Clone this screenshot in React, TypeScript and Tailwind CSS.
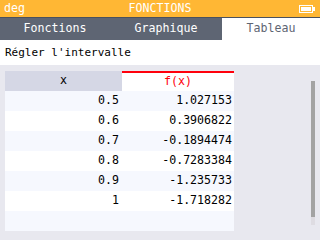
import React from "react";

const rows: [string, string][] = [
  ["0.5", "1.027153"],
  ["0.6", "0.3906822"],
  ["0.7", "-0.1894474"],
  ["0.8", "-0.7283384"],
  ["0.9", "-1.235733"],
  ["1", "-1.718282"],
  ["", ""],
];

export default function App() {
  return (
    <div className="w-[320px] h-[240px] bg-[#E8E8EF] flex flex-col font-['DejaVu_Sans_Mono',monospace] text-[11.6px] leading-none overflow-hidden">
      <div className="h-[17px] bg-[#FFB734] grid grid-cols-[1fr_auto_1fr] items-center text-white px-[4px]">
        <span>deg</span>
        <span>FONCTIONS</span>
        <div className="flex justify-end pr-[1px]">
          <svg width="16" height="8" viewBox="0 0 16 8">
            <rect x="0.5" y="0.5" width="13" height="7" fill="none" stroke="white" />
            <rect x="2" y="2" width="10" height="4" fill="white" />
            <rect x="14" y="2" width="2" height="4" fill="white" />
          </svg>
        </div>
      </div>
      <div className="h-px bg-[#4B515D]" />
      <div className="flex h-[22px]">
        <div className="w-[110px] bg-[#5E6573] text-white flex items-center justify-center">Fonctions</div>
        <div className="w-[112px] bg-[#5E6573] text-white flex items-center justify-center">Graphique</div>
        <div className="w-[98px] bg-white text-[#5E6573] flex items-center justify-center">Tableau</div>
      </div>
      <div className="h-[25px] bg-white flex items-center px-[5px] text-black text-[11px]">R&eacute;gler l'intervalle</div>
      <div className="flex pt-[6px] pl-[5px]">
        <div className="flex flex-col w-[229px]">
          <div className="flex h-[20px]">
            <div className="w-[117px] bg-[#D5D7E5] flex items-center justify-center text-black">x</div>
            <div className="w-[112px] bg-white border-t-2 border-[#FF000C] flex items-center justify-center text-[#FF000C]">f(x)</div>
          </div>
          {rows.map((r, i) => (
            <div key={i} className={`flex h-[20px] text-black ${i % 2 === 0 ? "bg-[#F6F8FE]" : "bg-white"}`}>
              <div className="w-[117px] flex items-center justify-end pr-[3px]">{r[0]}</div>
              <div className="w-[112px] flex items-center justify-end pr-[2px]">{r[1]}</div>
            </div>
          ))}
        </div>
        <div className="ml-auto mr-[5px] mt-[10px] w-[4px] h-[144px] bg-[#DEDCE2] flex flex-col">
          <div className="h-[136px] bg-[#A3A3A3]" />
        </div>
      </div>
    </div>
  );
}
